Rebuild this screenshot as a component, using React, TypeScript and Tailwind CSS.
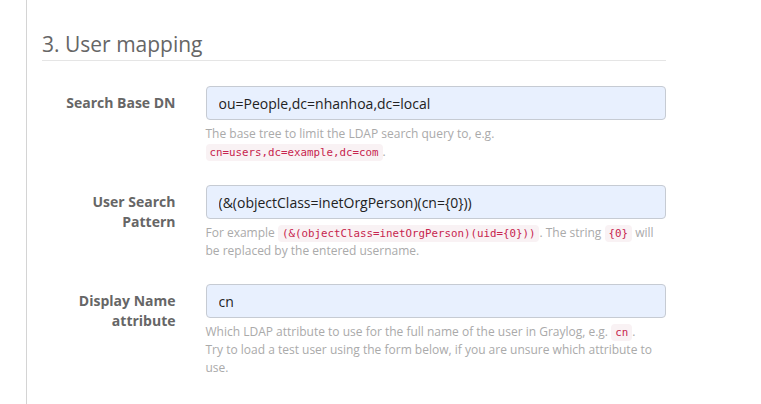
import React from "react";

const Code = ({ children }: { children: React.ReactNode }) => (
  <code className="rounded-[4px] bg-[#f9f2f4] px-[4px] py-[2px] font-['DejaVu_Sans_Mono',monospace] text-[10.8px] leading-none text-[#c7254e]">
    {children}
  </code>
);

type Field = {
  label: string[];
  value: string;
  help: React.ReactNode;
};

const fields: Field[] = [
  {
    label: ["Search Base DN"],
    value: "ou=People,dc=nhanhoa,dc=local",
    help: (
      <>
        The base tree to limit the LDAP search query to, e.g. <Code>cn=users,dc=example,dc=com</Code>.
      </>
    ),
  },
  {
    label: ["User Search", "Pattern"],
    value: "(&(objectClass=inetOrgPerson)(cn={0}))",
    help: (
      <>
        For example <Code>{"(&(objectClass=inetOrgPerson)(uid={0}))"}</Code>. The string <Code>{"{0}"}</Code> will
        be replaced by the entered username.
      </>
    ),
  },
  {
    label: ["Display Name", "attribute"],
    value: "cn",
    help: (
      <>
        Which LDAP attribute to use for the full name of the user in Graylog, e.g. <Code>cn</Code>. Try to load a
        test user using the form below, if you are unsure which attribute to use.
      </>
    ),
  },
];

const App = () => {
  return (
    <div className="min-h-screen w-[761px] bg-white font-['Open_Sans',sans-serif]">
      <div className="ml-[26px] min-h-[404px] border-l border-[#d4d4d4] pl-[15px]">
        <div className="w-[624px]">
          <h2 className="border-b border-[#e5e5e5] pt-[32px] pb-[4px] text-[21px] leading-[24px] font-normal text-[#666]">
            3. User mapping
          </h2>

          <div className="mt-[25px]">
            {fields.map((f) => (
              <div key={f.value} className="mb-[15px] grid grid-cols-[133.5px_1fr] gap-x-[30px]">
                <label className="pt-[7px] text-right text-[14px] leading-[20px] font-bold text-[#666]">
                  {f.label.map((l) => (
                    <div key={l}>{l}</div>
                  ))}
                </label>
                <div>
                  <input
                    readOnly
                    value={f.value}
                    className="block h-[34px] w-full rounded-[4px] border border-[#c6cbd3] bg-[#e8f0fe] px-[12px] py-[6px] text-[14px] leading-[20px] text-[#222] outline-none"
                  />
                  <p className="mt-[5px] mb-[9px] w-[450px] text-[12px] leading-[18px] text-[#aaa]">{f.help}</p>
                </div>
              </div>
            ))}
          </div>
        </div>
      </div>
    </div>
  );
};

export default App;
